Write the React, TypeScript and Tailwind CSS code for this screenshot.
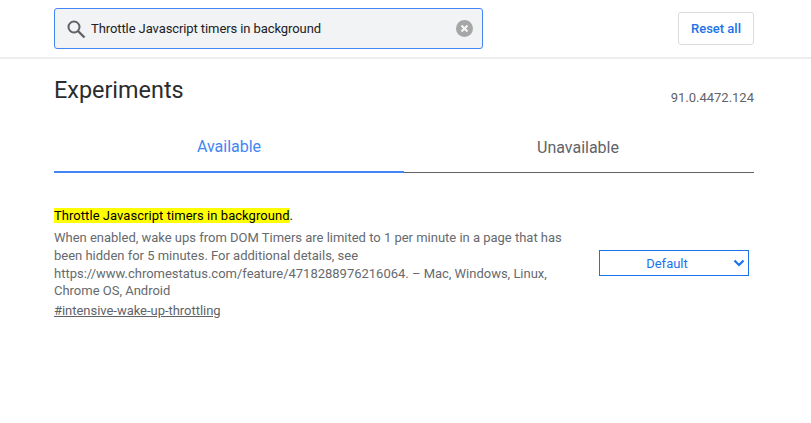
export default function App() {
  return (
    <div className="w-[811px] h-[423px] overflow-hidden bg-white font-['Roboto',sans-serif] text-[13px]">
      <div className="h-[59px] flex items-center justify-between pl-[54px] pr-[57px] border-b-2 border-[#eeeeee]">
        <div className="w-[429px] h-[41px] flex items-center rounded-[3px] border border-[#4285f4] bg-[#f1f3f4] pl-[11px] pr-[9px]">
          <svg width="20" height="20" viewBox="0 0 20 20" fill="none" stroke="#5f6368" strokeWidth="2">
            <circle cx="8" cy="8" r="5.5" />
            <path d="M12 12l6.5 6.5" strokeWidth="2.4" />
          </svg>
          <span className="ml-[5px] text-[13px] tracking-[-0.09px] text-[#202124] flex-1">Throttle Javascript timers in background</span>
          <svg width="17" height="17" viewBox="0 0 17 17">
            <circle cx="8.5" cy="8.5" r="8.5" fill="#a6a6a6" />
            <path d="M5.5 5.5l6 6M11.5 5.5l-6 6" stroke="#f4f4f4" strokeWidth="2.2" />
          </svg>
        </div>
        <div className="w-[76px] h-[33px] flex items-center justify-center rounded-[3px] border border-[#dadce0] text-[#1a73e8] font-medium text-[13px]">Reset all</div>
      </div>
      <div className="pl-[54px] pr-[57px]">
        <div className="flex justify-between items-start pt-[17px]">
          <h1 className="text-[23.4px] leading-[28px] text-[#2b2c2e]">Experiments</h1>
          <span className="mt-[13px] text-[13px] leading-[18px] text-[#5f6368]">91.0.4472.124</span>
        </div>
        <div className="flex mt-[17px] items-end">
          <div className="w-[350px] h-[49px] flex items-center justify-center border-b-2 border-[#4285f4] text-[#4285f4] text-[16px] pb-[2px]">Available</div>
          <div className="w-[350px] h-[49px] flex items-center justify-center border-b border-[#5f6368] text-[#5f6368] text-[16px] pr-[2px]">Unavailable</div>
        </div>
        <div className="flex justify-between items-center mt-[34px]">
          <div className="w-[510px]">
            <div className="text-[13px] leading-[17px] text-[#202124]">
              <mark className="bg-[#ffff00] text-black tracking-[0.05px]">Throttle Javascript timers in background</mark>.
            </div>
            <p className="text-[13px] leading-[17.75px] tracking-[-0.01px] text-[#666a6e] mt-[5px]">
              When enabled, wake ups from DOM Timers are limited to 1 per minute in a page that has been hidden for 5 minutes. For additional details, see https://www.chromestatus.com/feature/4718288976216064. – Mac, Windows, Linux, Chrome OS, Android
            </p>
            <a className="block mt-[2px] text-[13px] leading-[18px] tracking-[-0.03px] text-[#5f6368] underline">#intensive-wake-up-throttling</a>
          </div>
          <div className="w-[150px] h-[26px] mr-[5px] -mt-[2px] relative flex items-center justify-center border border-[#1a73e8] text-[#1a73e8] text-[13px] pr-[14px] pt-[2px]">
            Default
            <svg className="absolute right-[3px] top-[7px]" width="12" height="10" viewBox="0 0 12 10" fill="none" stroke="#1a73e8" strokeWidth="2.2">
              <path d="M1.5 2.5L6 7l4.5-4.5" />
            </svg>
          </div>
        </div>
      </div>
    </div>
  );
}
